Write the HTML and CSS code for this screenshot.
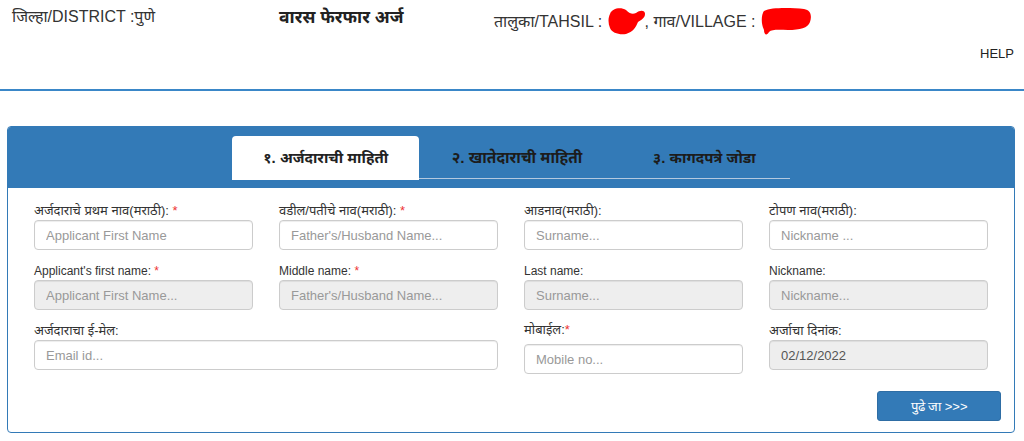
FILE: index.html
```html
<!DOCTYPE html>
<html>
<head>
<meta charset="utf-8">
<link rel="stylesheet" href="styles.css">
</head>
<body>
<header class="top">
  <div class="top-row">
    <div class="district">जिल्हा/DISTRICT :पुणे</div>
    <div class="title">वारस फेरफार अर्ज</div>
    <div class="place">तालुका/TAHSIL : <svg class="blot blot1" width="40" height="28" viewBox="0 0 40 28"><path d="M3 7 C5 1 14 0 19 3 C22 6 25 8 29 6 C33 3 38 3 38 7 C38 11 34 13 31 15 C29 20 26 25 19 27 C12 28 5 26 3 21 C1 16 1 11 3 7 Z" fill="#ff0000"/></svg>, गाव/VILLAGE : <svg class="blot blot2" width="52" height="30" viewBox="0 0 52 30"><path d="M4 5 C12 1 32 2 44 3 C51 4 52 10 50 16 C48 22 40 24 28 24 C20 24 12 23 9 26 C7 30 4 29 4 24 C1 18 1 9 4 5 Z" fill="#ff0000"/></svg></div>
  </div>
  <div class="help-row"><span class="help">HELP</span></div>
</header>

<section class="panel">
  <div class="panel-head">
    <ul class="tabs">
      <li class="tab active">१. अर्जदाराची माहिती</li>
      <li class="tab t2">२. खातेदाराची माहिती</li>
      <li class="tab t3">३. कागदपत्रे जोडा</li>
    </ul>
  </div>
  <div class="panel-body">
    <div class="form-grid">
      <div class="field">
        <label>अर्जदाराचे प्रथम नाव(मराठी): <span class="req">*</span></label>
        <input class="inp" placeholder="Applicant First Name">
      </div>
      <div class="field">
        <label>वडील/पतीचे नाव(मराठी): <span class="req">*</span></label>
        <input class="inp" placeholder="Father's/Husband Name...">
      </div>
      <div class="field">
        <label>आडनाव(मराठी):</label>
        <input class="inp" placeholder="Surname...">
      </div>
      <div class="field">
        <label>टोपण नाव(मराठी):</label>
        <input class="inp" placeholder="Nickname ...">
      </div>

      <div class="field">
        <label class="en">Applicant's first name: <span class="req">*</span></label>
        <input class="inp ro" placeholder="Applicant First Name..." readonly>
      </div>
      <div class="field">
        <label class="en">Middle name: <span class="req">*</span></label>
        <input class="inp ro" placeholder="Father's/Husband Name..." readonly>
      </div>
      <div class="field">
        <label class="en">Last name:</label>
        <input class="inp ro" placeholder="Surname..." readonly>
      </div>
      <div class="field">
        <label class="en">Nickname:</label>
        <input class="inp ro" placeholder="Nickname..." readonly>
      </div>

      <div class="field wide">
        <label>अर्जदाराचा ई-मेल:</label>
        <input class="inp" placeholder="Email id...">
      </div>
      <div class="field mobile">
        <label>मोबाईल:<span class="req">*</span></label>
        <input class="inp" placeholder="Mobile no...">
      </div>
      <div class="field">
        <label>अर्जाचा दिनांक:</label>
        <input class="inp ro date" value="02/12/2022" readonly>
      </div>
    </div>
    <div class="actions">
      <button class="btn">पुढे जा &gt;&gt;&gt;</button>
    </div>
  </div>
</section>
</body>
</html>
```

FILE: styles.css
```css
* { box-sizing: border-box; }
html, body { margin: 0; padding: 0; background: #fff; }
body {
  font-family: "Liberation Sans", Arial, "Noto Sans", sans-serif;
  color: #333;
  font-size: 13px;
}
.top { border-bottom: 2px solid #3a87c8; height: 91px; }
.top-row {
  display: grid;
  grid-template-columns: 267px 215px auto;
  padding-left: 12px;
  padding-top: 6px;
  font-size: 16px;
  line-height: 22px;
  color: #333;
}
.title { font-weight: bold; color: #222; font-size: 17.5px; }
.blot { vertical-align: -8px; }
.blot1 { margin-left: 0; margin-right: -2px; }
.blot2 { margin-left: 0; vertical-align: -9px; }
.help-row {
  display: flex;
  justify-content: flex-end;
  padding-right: 10px;
  margin-top: 10px;
}
.help { font-size: 13px; color: #222; }

.panel {
  margin: 35px 9px 0 7px;
  width: 1008px;
  border: 1px solid #337ab7;
  border-radius: 4px;
  overflow: hidden;
}
.panel-head {
  background: #337ab7;
  height: 61px;
  padding-top: 9px;
  display: flex;
  justify-content: center;
}
.tabs {
  list-style: none;
  margin: 0;
  padding: 0;
  display: flex;
  width: 558px;
  border-bottom: 1px solid #b4c9df;
  height: 43px;
}
.tab {
  width: 186px;
  text-align: center;
  font-size: 15px;
  font-weight: bold;
  line-height: 43px;
  color: #1c1c1c;
  border-radius: 4px 4px 0 0;
}
.tab.t2 { padding-left: 10px; font-size: 15.4px; }
.tab.t3 { padding-left: 14px; }
.tab.active {
  background: #fff;
  width: 188px;
  height: 44px;
  color: #222;
}
.panel-body { padding: 14px 26px 11px 26px; }
.form-grid {
  display: grid;
  grid-template-columns: repeat(4, 219px);
  column-gap: 26px;
  row-gap: 12px;
}
.field { display: flex; flex-direction: column; }
.field.wide { grid-column: span 2; }
label {
  font-size: 13px;
  line-height: 18px;
  color: #333;
  height: 18px;
}
label.en { font-size: 12px; }
.req { color: #e33; }
.inp {
  height: 30px;
  width: 100%;
  border: 1px solid #ccc;
  border-radius: 4px;
  padding: 0 11px;
  font-family: "Liberation Sans", Arial, sans-serif;
  font-size: 13px;
  color: #555;
  background: #fff;
  box-shadow: inset 0 1px 1px rgba(0,0,0,0.075);
  outline: none;
}
.inp::placeholder { color: #999; }
.inp.ro { background: #eee; }
.inp.date { color: #555; }
.mobile label { margin-top: -1px; }
.mobile .inp { margin-top: 5px; }
.actions {
  display: flex;
  justify-content: flex-end;
  margin-top: 17px;
  margin-right: -13px;
}
.btn {
  width: 124px;
  height: 30px;
  background: #337ab7;
  border: 1px solid #2e6da4;
  border-radius: 3px;
  color: #fff;
  font-family: "Liberation Sans", Arial, sans-serif;
  font-size: 13px;
}
```
